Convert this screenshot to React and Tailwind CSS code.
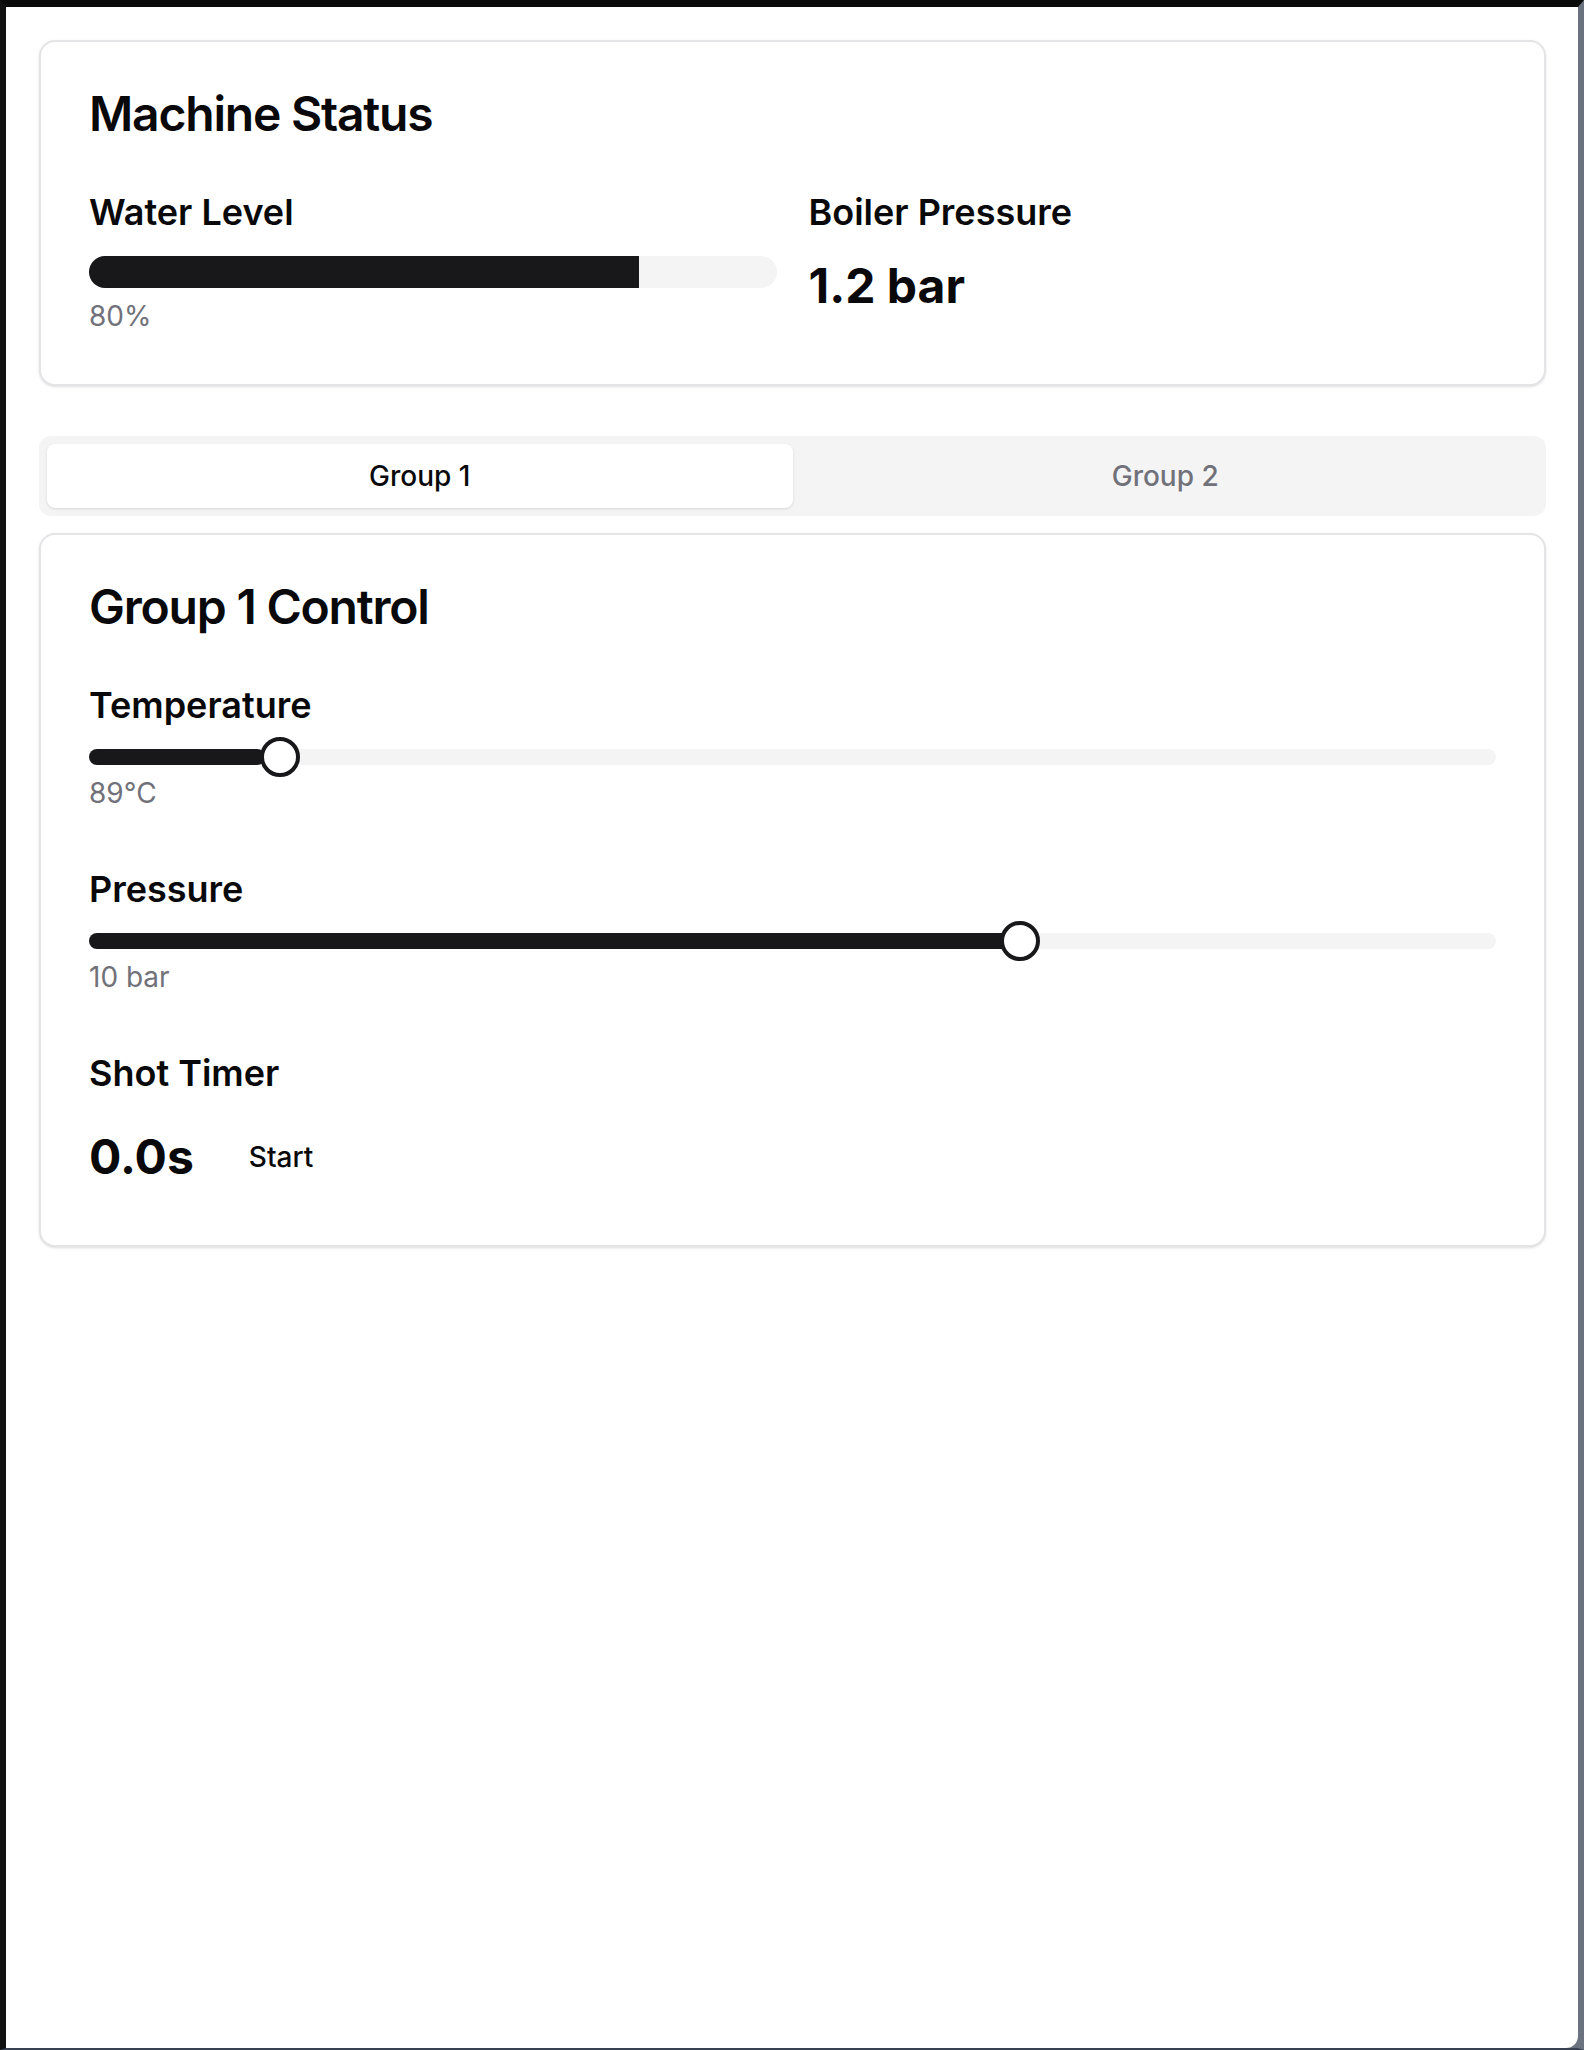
import { useState } from "react";

const temp = { value: 89, min: 88, max: 96 };
const pressure = { value: 10, min: 0, max: 15 };

function Slider({ value, min, max }) {
  const pct = (value - min) / (max - min);
  return (
    <div className="relative mt-[16px] h-[16px] w-full rounded-full bg-[#f4f4f5]">
      <div
        className="absolute left-0 top-0 h-full rounded-full bg-[#18181b]"
        style={{ width: `${pct * 100}%` }}
      />
      <div
        className="absolute top-1/2 h-[40px] w-[40px] -translate-y-1/2 rounded-full border-[4px] border-[#18181b] bg-white"
        style={{ left: `calc(${pct} * (100% - 40px))` }}
      />
    </div>
  );
}

function Card({ title, children, className = "" }) {
  return (
    <div className={`rounded-[16px] border-2 border-[#e4e4e7] bg-white shadow-sm ${className}`}>
      <div className="px-[48px] pb-[46px] pt-[48px]">
        <h2 className="text-[48px] font-semibold leading-none tracking-tight">{title}</h2>
      </div>
      <div className="px-[48px] pb-[48px]">{children}</div>
    </div>
  );
}

export default function App() {
  const [tab, setTab] = useState("g1");

  return (
    <div className="h-[2050px] w-full border-t-[7px] border-l-[6px] border-r-[6px] border-b-[2px] border-t-[#0a0a0a] border-l-[#111111] border-r-[#6b7280] border-b-[#374151] bg-[#6b7280] font-['Inter',sans-serif] text-[#09090b]">
      <div className="h-full rounded-br-[12px] bg-white pl-[33px] pr-[32px] pt-[33px]">
        <Card title="Machine Status">
          <div className="grid grid-cols-2 gap-[32px]">
            <div>
              <div className="text-[36px] font-semibold leading-[56px]">Water Level</div>
              <div className="mt-[16px] h-[32px] w-full overflow-hidden rounded-full bg-[#f4f4f5]">
                <div className="h-full w-[80%] bg-[#18181b]" />
              </div>
              <p className="mt-[8px] text-[28px] leading-[40px] text-[#71717a]">80%</p>
            </div>
            <div>
              <div className="text-[36px] font-semibold leading-[56px]">Boiler Pressure</div>
              <p className="mt-[14px] text-[48px] font-bold leading-[64px]">1.2 bar</p>
            </div>
          </div>
        </Card>

        <div className="mt-[50px] grid h-[80px] grid-cols-2 rounded-[12px] bg-[#f4f4f5] p-[8px]">
          <button
            onClick={() => setTab("g1")}
            className={`rounded-[8px] text-[28px] font-medium ${
              tab === "g1" ? "bg-white text-[#09090b] shadow-sm" : "text-[#71717a]"
            }`}
          >
            Group 1
          </button>
          <button
            onClick={() => setTab("g2")}
            className={`rounded-[8px] text-[28px] font-medium ${
              tab === "g2" ? "bg-white text-[#09090b] shadow-sm" : "text-[#71717a]"
            }`}
          >
            Group 2
          </button>
        </div>

        <Card title={tab === "g1" ? "Group 1 Control" : "Group 2 Control"} className="mt-[17px]">
          <div className="space-y-[48px]">
            <div>
              <label className="block text-[36px] font-semibold leading-[56px]">Temperature</label>
              <Slider {...temp} />
              <p className="mt-[8px] text-[28px] leading-[40px] text-[#71717a]">{temp.value}°C</p>
            </div>
            <div>
              <label className="block text-[36px] font-semibold leading-[56px]">Pressure</label>
              <Slider {...pressure} />
              <p className="mt-[8px] text-[28px] leading-[40px] text-[#71717a]">{pressure.value} bar</p>
            </div>
            <div>
              <label className="block text-[36px] font-semibold leading-[56px]">Shot Timer</label>
              <div className="mt-[16px] flex h-[80px] items-center gap-[23px]">
                <span className="text-[48px] font-bold leading-[64px]">0.0s</span>
                <button className="h-[80px] rounded-[12px] px-[32px] text-[28px] font-medium">Start</button>
              </div>
            </div>
          </div>
        </Card>
      </div>
    </div>
  );
}
